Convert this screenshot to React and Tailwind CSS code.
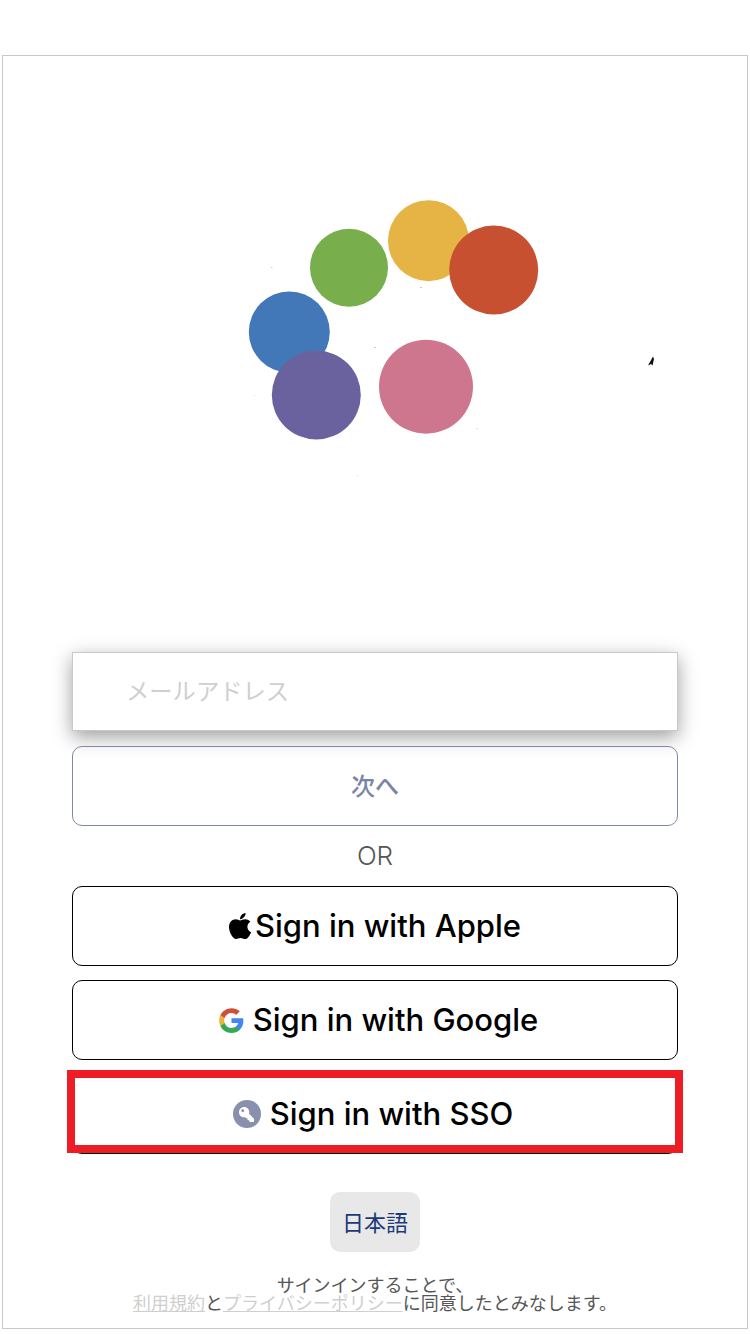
import React from "react";
import { FaApple, FaKey } from "react-icons/fa";

function GoogleG() {
  return (
    <svg width="27" height="27" viewBox="0 0 48 48" className="shrink-0">
      <path fill="#4285F4" d="M45.1 24.500c0-1.600-.1-3.100-.4-4.500H24v8.600h11.800c-.5 2.700-2.100 5-4.400 6.600v5.500h7.100c4.200-3.800 6.600-9.500 6.600-16.200z" />
      <path fill="#34A853" d="M24 46c5.900 0 10.900-2 14.500-5.300l-7.100-5.500c-2 1.300-4.500 2.100-7.400 2.100-5.700 0-10.500-3.800-12.300-9H4.400v5.700C8 41.100 15.400 46 24 46z" />
      <path fill="#E8B53C" d="M11.700 28.300c-.4-1.300-.7-2.800-.7-4.300s.3-3 .7-4.300V14H4.400C2.900 17 2 20.400 2 24s.9 7 2.400 10l7.300-5.700z" />
      <path fill="#CF4F3C" d="M24 10.700c3.200 0 6.100 1.100 8.400 3.300l6.300-6.300C34.900 4.200 29.900 2 24 2 15.400 2 8 6.900 4.400 14l7.300 5.700c1.800-5.200 6.600-9 12.300-9z" />
    </svg>
  );
}

function SignInButton({ icon, label, gap, nudge }) {
  return (
    <button className={`h-20 w-full rounded-[10px] border border-black bg-white flex items-center justify-center ${gap} ${nudge} text-[31px] font-medium text-black font-['Inter','Noto_Sans_CJK_JP',sans-serif]`}>
      {icon}
      <span>{label}</span>
    </button>
  );
}

export default function App() {
  return (
    <div className="w-[750px] h-[1334px] bg-white pt-[55px] pl-[2px] font-['Inter','Noto_Sans_CJK_JP',sans-serif]">
      <div className="w-[746px] h-[1274px] border border-[#c8c8c8] flex flex-col">
        <svg width="744" height="596" viewBox="3 56 744 596" className="block shrink-0">
          <circle cx="428.500" cy="240.700" r="40.500" fill="#e6b345" />
          <circle cx="493.700" cy="270" r="44.500" fill="#c65030" />
          <circle cx="349" cy="267.700" r="39" fill="#78ae4b" />
          <circle cx="289.300" cy="332" r="40.500" fill="#4378b8" />
          <circle cx="316.300" cy="395" r="44.500" fill="#6a629f" />
          <circle cx="426" cy="386.700" r="47" fill="#cf768f" />
          <path d="M648 365.500 L653 356.500 L654 359 L652.500 365.500 L651 364 Z" fill="#111" />
          <rect x="271" y="267" width="1.500" height="1" fill="#ccc" />
          <rect x="420" y="287" width="2" height="1" fill="#ccc" />
          <rect x="374" y="347" width="2" height="1" fill="#ccc" />
          <rect x="254" y="395" width="1" height="1" fill="#ddd" />
          <rect x="476" y="428" width="2" height="1" fill="#ddd" />
          <rect x="357" y="475" width="1" height="1" fill="#ddd" />
        </svg>

        <div className="px-[69px] flex flex-col flex-1 relative">
          <div className="h-[79px] border border-[#c8c8c8] bg-white flex items-center pl-[53px] pb-[2px] text-[23.300px] text-[#cfcfcf] font-['Noto_Sans_CJK_JP',sans-serif] shadow-[0_6px_18px_rgba(0,0,0,0.38)]">
            メールアドレス
          </div>
          <button className="mt-[15px] h-20 pb-[2px] rounded-[10px] border border-[#8089a8] flex items-center justify-center text-[24px] font-medium text-[#7a84a6] font-['Noto_Sans_CJK_JP',sans-serif]">
            次へ
          </button>
          <div className="h-[60px] pb-[2px] flex items-center justify-center text-[26px] font-light text-[#555]">OR</div>
          <div className="flex flex-col gap-[14px]">
            <SignInButton label="Sign in with Apple" gap="gap-0" nudge="pr-[4px]" icon={<FaApple className="text-[30px] shrink-0" />} />
            <SignInButton label="Sign in with Google" gap="gap-[8px]" nudge="pl-[6px]" icon={<GoogleG />} />
            <div className="relative">
              <SignInButton
                label="Sign in with SSO"
                gap="gap-[9px]"
                nudge="pr-[4px]"
                icon={
                  <span className="w-[28px] h-[28px] rounded-full bg-[#8890ad] flex items-center justify-center shrink-0">
                    <FaKey className="text-[15px] text-white -scale-x-100" />
                  </span>
                }
              />
              <div className="absolute -left-[5px] -right-[5px] -top-[4px] h-[83px] border-[8px] border-[#ee1c25]" />
            </div>
          </div>
          <div className="mt-[38px] flex justify-center">
            <button className="w-[90px] h-[60px] pb-[2px] rounded-[10px] bg-[#e8e8e8] text-[22px] text-[#1d3a78] font-['Noto_Sans_CJK_JP',sans-serif]">
              日本語
            </button>
          </div>
          <div className="mt-[23px] text-center text-[18px] leading-[18px] text-[#555] font-['Noto_Sans_CJK_JP',sans-serif]">
            <div>サインインすることで、</div>
            <div>
              <a className="text-[#cfcfcf] underline">利用規約</a>と<a className="text-[#cfcfcf] underline">プライバシーポリシー</a>に同意したとみなします。
            </div>
          </div>
        </div>
      </div>
    </div>
  );
}
